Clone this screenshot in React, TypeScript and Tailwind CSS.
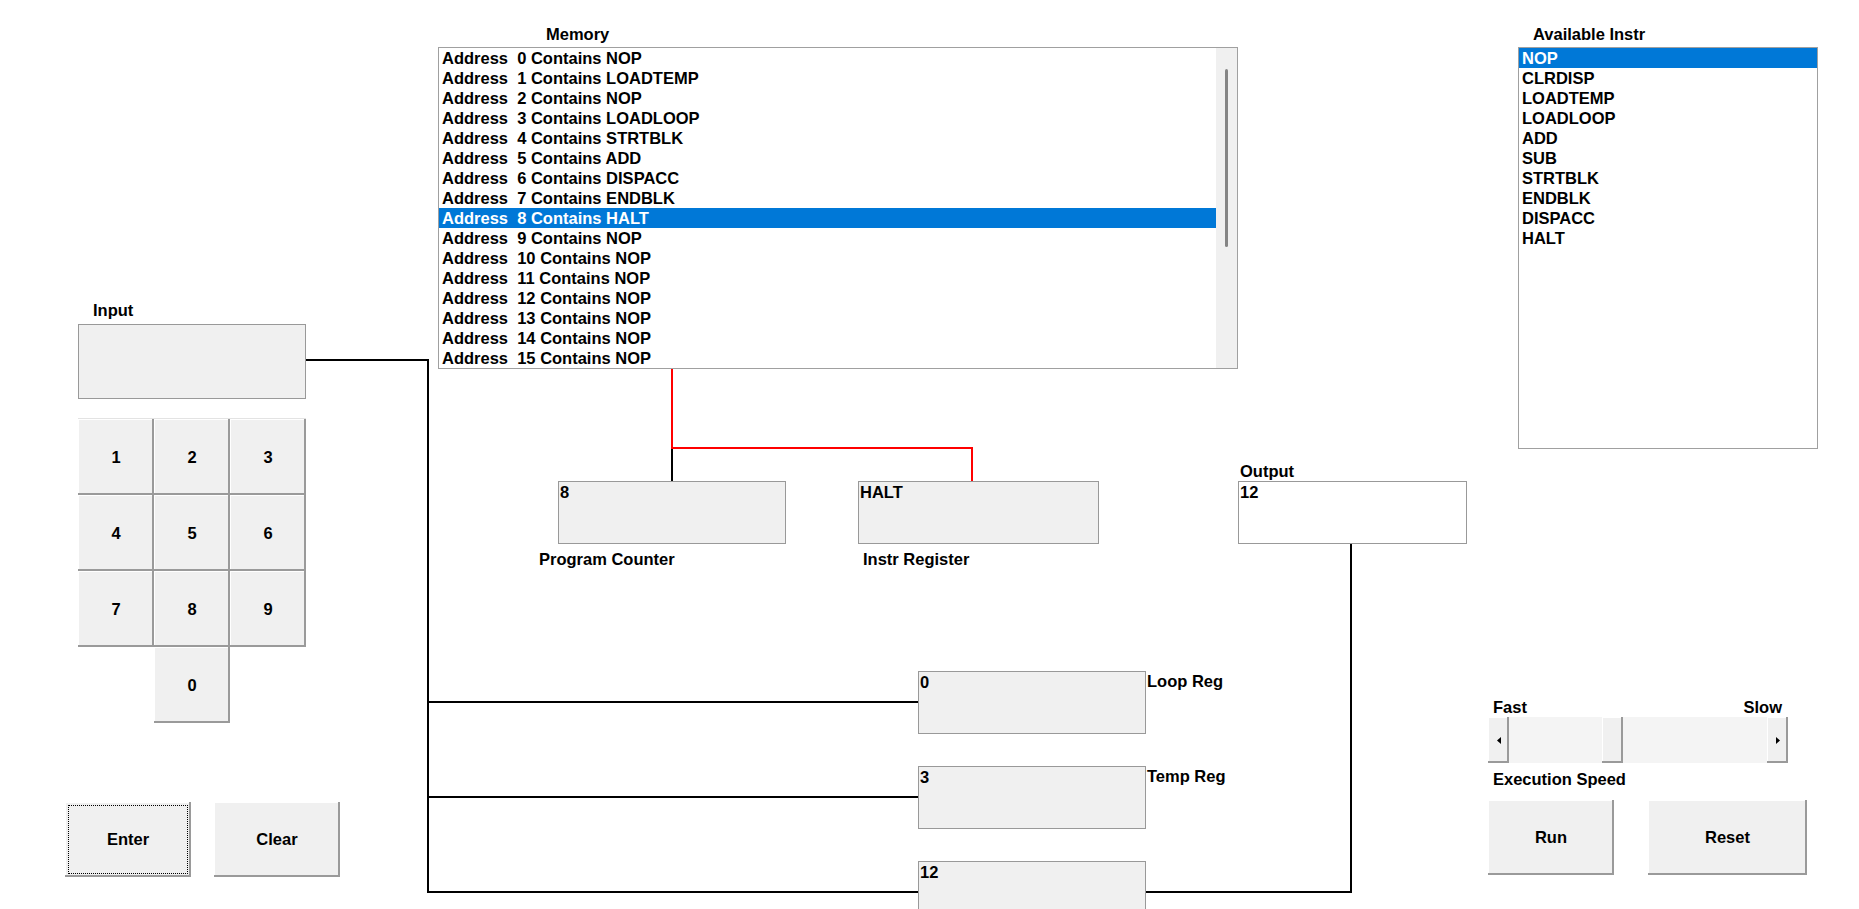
import React from 'react';

const memory = ['NOP', 'LOADTEMP', 'NOP', 'LOADLOOP', 'STRTBLK', 'ADD', 'DISPACC', 'ENDBLK', 'HALT', 'NOP', 'NOP', 'NOP', 'NOP', 'NOP', 'NOP', 'NOP'];
const instrs = ['NOP', 'CLRDISP', 'LOADTEMP', 'LOADLOOP', 'ADD', 'SUB', 'STRTBLK', 'ENDBLK', 'DISPACC', 'HALT'];

// classic raised windows button look
const raised = 'bg-[#f0f0f0] shadow-[inset_-2px_-2px_0_#9a9a9a,inset_1px_1px_0_#ffffff]';

const RegBox: React.FC<{ value: string; className: string }> = ({ value, className }) => (
  <div className={`border border-[#999999] leading-[20px] pl-[1px] ${className}`}>{value}</div>
);

const Wires: React.FC = () => (
  <svg className="absolute inset-0" width="1859" height="909">
    <g fill="none" stroke="#000000" strokeWidth="2">
      <path d="M306 360H428V892H918" />
      <path d="M428 702H918" />
      <path d="M428 797H918" />
      <path d="M1146 892H1351V544" />
      <path d="M672 448V481" />
    </g>
    <path d="M672 369V448H972V481" fill="none" stroke="#ff0000" strokeWidth="2" />
  </svg>
);

const Arrow: React.FC<{ dir: 'left' | 'right' }> = ({ dir }) => (
  <svg width="4" height="7" viewBox="0 0 4 7">
    <path d={dir === 'left' ? 'M4 0L0 3.5L4 7Z' : 'M0 0L4 3.5L0 7Z'} fill="#000000" />
  </svg>
);

const Keypad: React.FC = () => (
  <div className="ml-[13px] mt-[19px] grid grid-cols-[76px_76px_76px] grid-rows-[76px_76px_76px_76px] border-t border-[#e3e3e3] w-fit">
    {['1', '2', '3', '4', '5', '6', '7', '8', '9'].map((d) => (
      <button key={d} className={`${raised} flex items-center justify-center`}>{d}</button>
    ))}
    <button className={`${raised} col-start-2 flex items-center justify-center`}>0</button>
  </div>
);

export default function App() {
  return (
    <div className="relative w-[1859px] h-[909px] overflow-hidden bg-white text-black font-bold text-[16.5px] font-['Liberation_Sans',Arial,sans-serif]">
      <Wires />

      {/* input + keypad */}
      <div className="absolute left-[65px] top-[300px] flex flex-col">
        <div className="pl-[28px] leading-[20px]">Input</div>
        <div className="ml-[13px] mt-[4px] w-[228px] h-[75px] bg-[#f0f0f0] border border-[#999999]" />
        <Keypad />
        <div className="mt-[79px] flex gap-[23px]">
          <button className={`${raised} w-[126px] h-[75px] flex p-[3px]`}>
            <span className="flex-1 border border-dotted border-black flex items-center justify-center">Enter</span>
          </button>
          <button className={`${raised} w-[126px] h-[75px] flex items-center justify-center`}>Clear</button>
        </div>
      </div>

      {/* memory */}
      <div className="absolute left-[438px] top-[24px] flex flex-col">
        <div className="pl-[108px] leading-[20px]">Memory</div>
        <div className="mt-[3px] w-[800px] h-[322px] border border-[#a0a0a0] bg-white flex">
          <div className="flex-1 flex flex-col">
            {memory.map((m, i) => (
              <div
                key={i}
                className={`h-[20px] leading-[20px] pl-[3px] whitespace-pre ${i === 8 ? 'bg-[#0078d7] text-white' : ''}`}
              >
                {`Address  ${i} Contains ${m}`}
              </div>
            ))}
          </div>
          <div className="w-[21px] bg-[#f0f0f0] flex justify-center pt-[21px]">
            <div className="w-[3px] h-[178px] rounded-full bg-[#858585]" />
          </div>
        </div>
      </div>

      {/* program counter */}
      <div className="absolute left-[539px] top-[481px] flex flex-col items-start">
        <RegBox value="8" className="ml-[19px] w-[228px] h-[63px] bg-[#f0f0f0]" />
        <div className="mt-[5px] leading-[20px]">Program Counter</div>
      </div>

      {/* instruction register */}
      <div className="absolute left-[858px] top-[481px] flex flex-col items-start">
        <RegBox value="HALT" className="w-[241px] h-[63px] bg-[#f0f0f0]" />
        <div className="ml-[5px] mt-[5px] leading-[20px]">Instr Register</div>
      </div>

      {/* output */}
      <div className="absolute left-[1238px] top-[461px] flex flex-col">
        <div className="pl-[2px] leading-[20px]">Output</div>
        <RegBox value="12" className="w-[229px] h-[63px] bg-white" />
      </div>

      {/* loop / temp / accumulator */}
      <div className="absolute left-[918px] top-[671px] flex flex-col gap-[32px]">
        <div className="flex items-start">
          <RegBox value="0" className="w-[228px] h-[63px] bg-[#f0f0f0]" />
          <div className="pl-[1px] leading-[20px]">Loop Reg</div>
        </div>
        <div className="flex items-start">
          <RegBox value="3" className="w-[228px] h-[63px] bg-[#f0f0f0]" />
          <div className="pl-[1px] leading-[20px]">Temp Reg</div>
        </div>
        <div className="flex items-start">
          <RegBox value="12" className="w-[228px] h-[63px] bg-[#f0f0f0]" />
        </div>
      </div>

      {/* available instructions */}
      <div className="absolute left-[1518px] top-[24px] flex flex-col">
        <div className="pl-[15px] leading-[20px]">Available Instr</div>
        <div className="mt-[3px] w-[300px] h-[402px] border border-[#a0a0a0] bg-white flex flex-col">
          {instrs.map((s, i) => (
            <div key={s} className={`h-[20px] leading-[20px] pl-[3px] ${i === 0 ? 'bg-[#0078d7] text-white' : ''}`}>
              {s}
            </div>
          ))}
        </div>
      </div>

      {/* speed + run/reset */}
      <div className="absolute left-[1488px] top-[697px] flex flex-col">
        <div className="w-[300px] flex justify-between leading-[20px]">
          <span className="pl-[5px]">Fast</span>
          <span className="pr-[6px]">Slow</span>
        </div>
        <div className="w-[300px] h-[46px] flex bg-[#f4f4f4]">
          <div className={`${raised} w-[21px] flex items-center justify-center`}>
            <Arrow dir="left" />
          </div>
          <div className="w-[93px]" />
          <div className={`${raised} w-[21px]`} />
          <div className="flex-1" />
          <div className={`${raised} w-[21px] flex items-center justify-center`}>
            <Arrow dir="right" />
          </div>
        </div>
        <div className="mt-[6px] pl-[5px] leading-[20px]">Execution Speed</div>
        <div className="mt-[11px] flex gap-[34px]">
          <button className={`${raised} w-[126px] h-[75px] flex items-center justify-center`}>Run</button>
          <button className={`${raised} w-[159px] h-[75px] flex items-center justify-center`}>Reset</button>
        </div>
      </div>
    </div>
  );
}
